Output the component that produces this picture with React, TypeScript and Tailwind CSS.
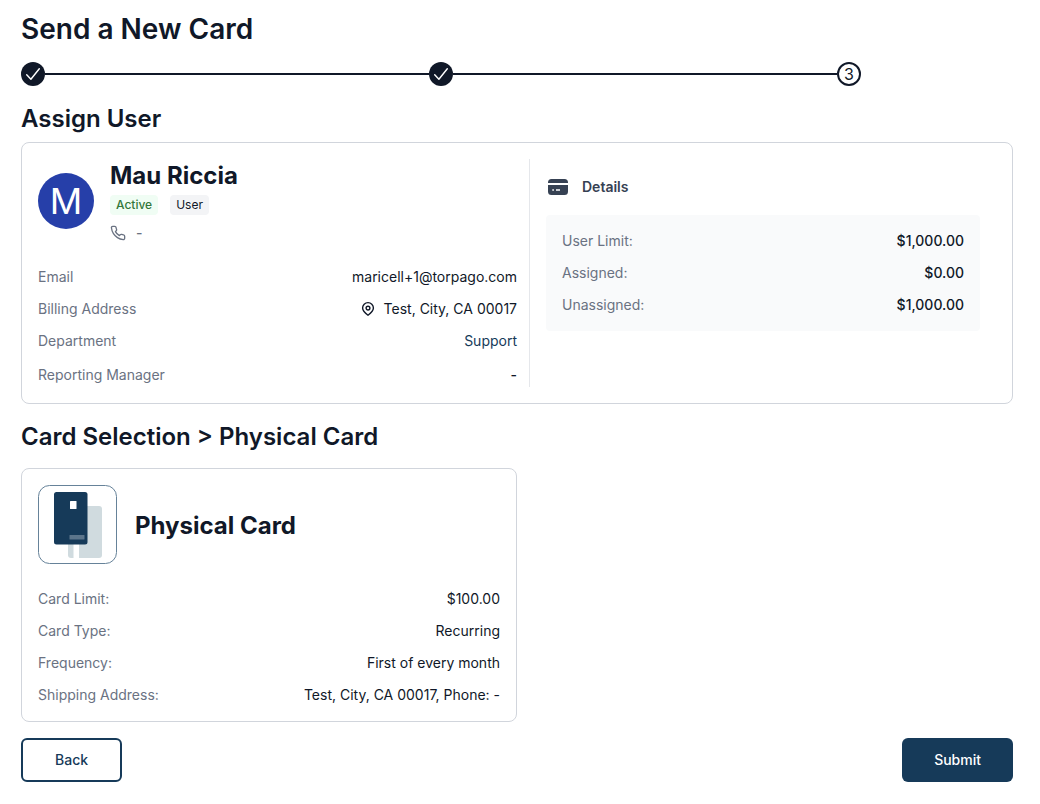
import type { ReactNode } from "react";

interface DetailRow {
  label: string;
  value: ReactNode;
}

const limits: DetailRow[] = [
  { label: "User Limit:", value: "$1,000.00" },
  { label: "Assigned:", value: "$0.00" },
  { label: "Unassigned:", value: "$1,000.00" },
];

const cardDetails: DetailRow[] = [
  { label: "Card Limit:", value: "$100.00" },
  { label: "Card Type:", value: "Recurring" },
  { label: "Frequency:", value: "First of every month" },
  { label: "Shipping Address:", value: "Test, City, CA 00017, Phone: -" },
];

const PhoneIcon = () => (
  <svg className="size-4" viewBox="0 0 24 24" fill="none" stroke="currentColor" strokeWidth="2" strokeLinecap="round" strokeLinejoin="round" aria-hidden="true">
    <path d="M22 16.92v3a2 2 0 0 1-2.18 2 19.79 19.79 0 0 1-8.63-3.07 19.5 19.5 0 0 1-6-6 19.79 19.79 0 0 1-3.07-8.67A2 2 0 0 1 4.11 2h3a2 2 0 0 1 2 1.72 12.84 12.84 0 0 0 .7 2.81 2 2 0 0 1-.45 2.11L8.09 9.91a16 16 0 0 0 6 6l1.27-1.27a2 2 0 0 1 2.11-.45 12.84 12.84 0 0 0 2.81.7A2 2 0 0 1 22 16.92z" />
  </svg>
);

const PinIcon = () => (
  <svg className="size-4" viewBox="0 0 16 16" fill="none" stroke="currentColor" strokeWidth="1.4" strokeLinejoin="round" aria-hidden="true">
    <path d="M8 14.200C5.600 12.400 2.600 9.800 2.600 7a5.400 5.400 0 0 1 10.800 0c0 2.800-3 5.400-5.400 7.200Z" />
    <circle cx="8" cy="7.100" r="1.900" />
  </svg>
);

const CardIcon = () => (
  <svg className="size-6 text-gray-700" viewBox="0 0 24 24" fill="currentColor" aria-hidden="true">
    <path d="M2 8V7.500A3.500 3.500 0 0 1 5.500 4h13A3.500 3.500 0 0 1 22 7.500V8Z" />
    <path
      fillRule="evenodd"
      d="M2 10h20v6.500a3.500 3.500 0 0 1-3.500 3.500h-13A3.500 3.500 0 0 1 2 16.500Zm4.300 4.200v1.600h1.600v-1.600Zm3.700 0v1.600h4v-1.600Z"
    />
  </svg>
);

const PhysicalCardIcon = () => (
  <svg className="size-[79px]" viewBox="0 0 79 79" fill="none" aria-hidden="true">
    <rect x="0.500" y="0.500" width="78" height="78" rx="11" stroke="#668299" />
    <rect x="30" y="21" width="34" height="52" rx="3" fill="#d0dbdf" />
    <path d="M35.500 59h5.500v14h-5.500z" fill="#fff" />
    <rect x="16" y="7" width="33.500" height="52.500" rx="2.500" fill="#163a59" />
    <rect x="32" y="16" width="6.500" height="8" rx="0.500" fill="#fff" />
    <rect x="31.500" y="50" width="15" height="4.500" rx="0.500" fill="#5c758b" />
  </svg>
);

const DoneStep = () => (
  <li className="flex flex-1 items-center">
    <span className="flex size-6 shrink-0 items-center justify-center rounded-full bg-gray-900 text-white">
      <svg className="size-4" viewBox="0 0 16 16" fill="none" stroke="currentColor" strokeWidth="1.4" strokeLinecap="round" strokeLinejoin="round" aria-label="Done">
        <path d="M1.700 8.700 5.900 13.300 14.300 2.700" />
      </svg>
    </span>
    <span className="h-[2px] flex-1 bg-gray-900" />
  </li>
);

const Rows = ({ rows, strong }: { rows: DetailRow[]; strong?: boolean }) => (
  <dl className="flex flex-col gap-3 text-sm font-normal">
    {rows.map(({ label, value }) => (
      <div key={label} className="flex items-center justify-between">
        <dt className="text-gray-500">{label}</dt>
        <dd className={strong ? "font-medium text-gray-900" : "text-gray-900"}>
          {value}
        </dd>
      </div>
    ))}
  </dl>
);

const userDetails: DetailRow[] = [
  { label: "Email", value: "maricell+1@torpago.com" },
  {
    label: "Billing Address",
    value: (
      <span className="flex items-center gap-2">
        <PinIcon />
        Test, City, CA 00017
      </span>
    ),
  },
  {
    label: "Department",
    value: (
      <a href="#support" className="text-[#163a59]">
        Support
      </a>
    ),
  },
  {
    label: "Reporting Manager",
    value: <span className="block leading-6 font-medium">-</span>,
  },
];

const App = () => {
  return (
    <main className="bg-white pt-[9px] pr-[27px] pb-5 pl-[21px] font-['Inter',sans-serif] font-medium text-gray-900">
      <h1 className="text-[28px] leading-10 font-semibold">Send a New Card</h1>

      <ol className="mt-[13px] flex max-w-[840px] items-center">
        <DoneStep />
        <DoneStep />
        <li className="flex size-6 items-center justify-center rounded-full border-2 border-gray-900 text-base leading-5 font-normal">
          3
        </li>
      </ol>

      <h2 className="mt-[17px] text-2xl font-semibold">Assign User</h2>
      <section className="mt-[7px] grid grid-cols-2 rounded-lg border border-gray-300 p-4">
        <div>
          <div className="mb-6 flex items-center gap-4">
            <div className="flex size-14 items-center justify-center rounded-full bg-[#263fa9] text-4xl font-normal text-white">
              M
            </div>
            <div>
              <h3 className="pt-px text-2xl font-bold">Mau Riccia</h3>
              <div className="mt-[3px] flex gap-3 text-xs leading-5">
                <span className="rounded bg-green-50 px-[6px] text-[#33783b]">
                  Active
                </span>
                <span className="rounded bg-gray-100 px-[6px] font-normal text-gray-900">
                  User
                </span>
              </div>
              <div className="mt-2 flex items-center gap-[10px] text-sm text-gray-500">
                <PhoneIcon />
                <span>-</span>
              </div>
            </div>
          </div>
          <Rows rows={userDetails} />
        </div>

        <div className="ml-3 border-l border-gray-200 px-4 pt-4">
          <h3 className="flex items-center gap-3 text-sm leading-6 font-semibold text-gray-700">
            <CardIcon />
            Details
          </h3>
          <div className="mt-4 rounded bg-gray-50 p-4">
            <Rows rows={limits} strong />
          </div>
        </div>
      </section>

      <h2 className="mt-[17px] text-2xl font-semibold">
        Card Selection &gt; Physical Card
      </h2>
      <section className="mt-[15px] w-1/2 rounded-lg border border-gray-300 p-4">
        <div className="mb-[25px] flex items-center gap-[18px]">
          <PhysicalCardIcon />
          <h3 className="pt-[2px] text-2xl font-bold">Physical Card</h3>
        </div>
        <Rows rows={cardDetails} />
      </section>

      <div className="mt-4 flex justify-between text-sm">
        <button
          type="button"
          className="h-11 rounded-md border-2 border-[#163a59] px-8 text-[#163a59]"
        >
          Back
        </button>
        <button
          type="submit"
          className="h-11 rounded-md bg-[#163a59] px-8 text-white"
        >
          Submit
        </button>
      </div>
    </main>
  );
};

export default App;
